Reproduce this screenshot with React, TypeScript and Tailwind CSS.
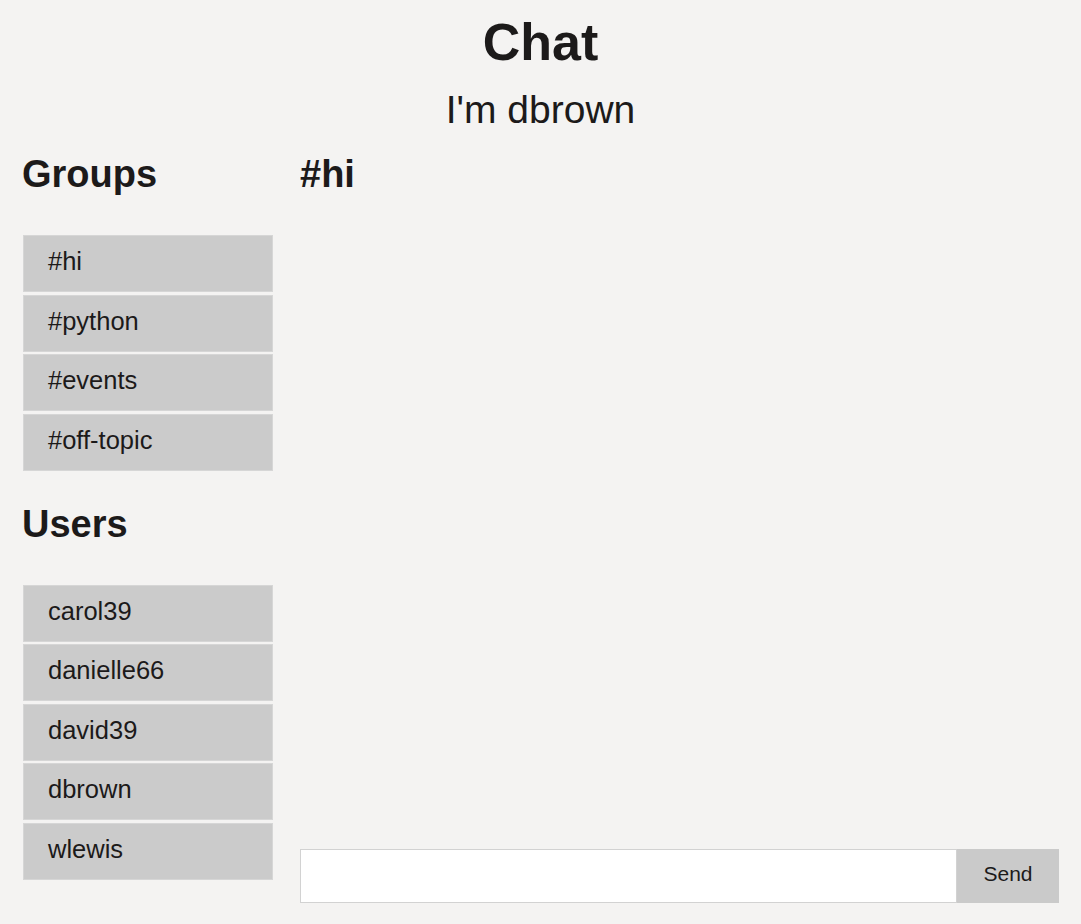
import React from "react";

const groups = ["#hi", "#python", "#events", "#off-topic"];
const users = ["carol39", "danielle66", "david39", "dbrown", "wlewis"];

function List({ items }: { items: string[] }) {
  return (
    <ul className="flex flex-col gap-[2.5px]">
      {items.map((t) => (
        <li
          key={t}
          className="h-[57px] flex items-center pl-[24px] pb-[4px] bg-[#cbcbcb] border border-[#d6d6d6] text-[25.5px] text-[#1c1a1a]"
        >
          {t}
        </li>
      ))}
    </ul>
  );
}

export default function App() {
  return (
    <div
      className="h-[924px] bg-[#f4f3f2] text-[#1c1a1a] flex flex-col overflow-hidden"
      style={{ fontFamily: '"Liberation Sans", Arial, Helvetica, sans-serif' }}
    >
      <header className="flex flex-col items-center pt-[16px]">
        <h1 className="text-[52px] leading-none font-bold">Chat</h1>
        <p className="text-[39px] leading-none mt-[22px]">I'm dbrown</p>
      </header>
      <div className="flex flex-1 mt-[26px] pl-[23px] pr-[22px] pb-[21px]">
        <aside className="w-[250px] flex flex-col">
          <h2 className="text-[38px] leading-none font-bold -ml-px">Groups</h2>
          <div className="mt-[42px]">
            <List items={groups} />
          </div>
          <h2 className="text-[38px] leading-none font-bold mt-[34px] -ml-px">Users</h2>
          <div className="mt-[42px]">
            <List items={users} />
          </div>
        </aside>
        <main className="flex-1 ml-[27px] flex flex-col justify-between">
          <h2 className="text-[38px] leading-none font-bold">#hi</h2>
          <div className="flex h-[54px]">
            <input
              type="text"
              className="flex-1 bg-white border border-[#d2d2d2] outline-none px-2 text-[20px]"
            />
            <button className="w-[102px] bg-[#cacaca] text-[21px] text-[#1c1a1a] flex items-center justify-center pb-[4px]">
              Send
            </button>
          </div>
        </main>
      </div>
    </div>
  );
}
